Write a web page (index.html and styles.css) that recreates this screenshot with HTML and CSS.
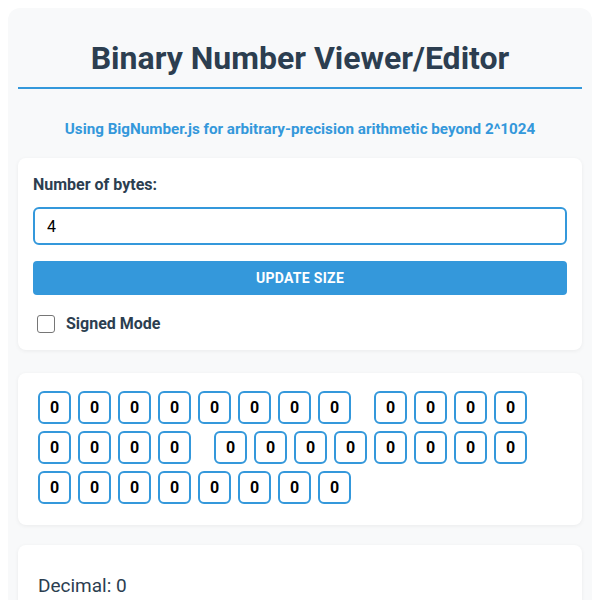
FILE: index.html
```html
<!doctype html>
<html>
<head>
    <meta charset="utf-8"/>
    <title>Binary Number Viewer/Editor</title>
    <link rel="stylesheet" href="styles.css">
</head>
<body>
    <div class="container">
        <h1>Binary Number Viewer/Editor</h1>
        <p class="note">Using BigNumber.js for arbitrary-precision arithmetic beyond 2^1024</p>

        <div class="card controls">
            <label class="field-label" for="bytes">Number of bytes:</label>
            <input id="bytes" class="bytes-input" type="number" value="4" min="1">
            <button class="update-btn" id="update">Update Size</button>
            <label class="signed">
                <input type="checkbox" id="signed">
                <span>Signed Mode</span>
            </label>
        </div>

        <div class="card">
            <div class="bits" id="bits"></div>
        </div>

        <div class="card values">
            <div class="value-line">Decimal: <span id="decimal">0</span></div>
        </div>
    </div>

    <script>
        var bitsEl = document.getElementById('bits');
        var bits = [];

        function render() {
            var n = parseInt(document.getElementById('bytes').value, 10) || 1;
            bits = [];
            bitsEl.innerHTML = '';
            for (var i = 0; i < n * 8; i++) {
                bits.push(0);
                var b = document.createElement('div');
                b.className = 'bit' + (i % 8 === 7 ? ' byte-end' : '');
                b.textContent = '0';
                b.setAttribute('data-i', i);
                b.onclick = toggle;
                bitsEl.appendChild(b);
            }
            update();
        }

        function toggle() {
            var i = +this.getAttribute('data-i');
            bits[i] = bits[i] ? 0 : 1;
            this.textContent = bits[i];
            update();
        }

        function update() {
            var v = 0;
            for (var i = 0; i < bits.length; i++) { v = v * 2 + bits[i]; }
            document.getElementById('decimal').textContent = v;
        }

        document.getElementById('update').onclick = render;
        render();
    </script>
</body>
</html>
```

FILE: styles.css
```css
html {
    font-family: Roboto, "Liberation Sans", Arial, sans-serif;
}
body {
    margin: 8px;
    background: #ffffff;
}
* {
    box-sizing: border-box;
}

.container {
    background: #f8f9fa;
    border-radius: 12px;
    padding: 10px;
}

h1 {
    margin: 21px 0 0;
    padding-bottom: 10px;
    border-bottom: 2px solid #3498db;
    text-align: center;
    font-size: 32px;
    color: #2c3e50;
}

.note {
    margin: 31px 0 20px;
    text-align: center;
    font-size: 15.2px;
    font-weight: bold;
    color: #3498db;
}

.card {
    background: #ffffff;
    border-radius: 8px;
    padding: 18px 20px 21px;
    margin-bottom: 20px;
    box-shadow: 0 1px 4px rgba(0, 0, 0, 0.06);
}

.controls {
    padding: 15px 15px 17px;
    margin-bottom: 23px;
}

.field-label {
    display: block;
    font-size: 16px;
    font-weight: bold;
    color: #2c3e50;
    margin: 2px 0 13px;
}

.bytes-input {
    display: block;
    width: 100%;
    height: 38px;
    border: 2px solid #3498db;
    border-radius: 6px;
    padding: 0 12px;
    font-family: inherit;
    font-size: 16px;
    color: #000000;
    outline: none;
}

.update-btn {
    display: block;
    width: 100%;
    height: 34px;
    margin-top: 16px;
    border: none;
    border-radius: 4px;
    background: #3498db;
    color: #ffffff;
    font-family: inherit;
    font-size: 14px;
    font-weight: bold;
    letter-spacing: 0.3px;
    text-transform: uppercase;
    cursor: pointer;
}

.signed {
    display: flex;
    align-items: center;
    gap: 11px;
    margin-top: 19px;
    font-size: 16px;
    font-weight: bold;
    color: #2c3e50;
}
.signed input {
    appearance: none;
    -webkit-appearance: none;
    width: 18px;
    height: 18px;
    margin: 0 0 0 4px;
    border: 1.5px solid #767676;
    border-radius: 3px;
    background: #ffffff;
}
.signed input:checked {
    background: #3498db;
    border-color: #3498db;
}

.bits {
    display: flex;
    flex-wrap: wrap;
    gap: 7px;
}
.bit {
    width: 33px;
    height: 33px;
    border: 2px solid #3498db;
    border-radius: 6px;
    display: flex;
    align-items: center;
    justify-content: center;
    font-size: 16px;
    font-weight: bold;
    color: #000000;
    cursor: pointer;
}
.bit.byte-end {
    margin-right: 16px;
}

.values {
    padding-top: 29px;
}
.value-line {
    font-size: 19px;
    color: #2c3e50;
}
```
